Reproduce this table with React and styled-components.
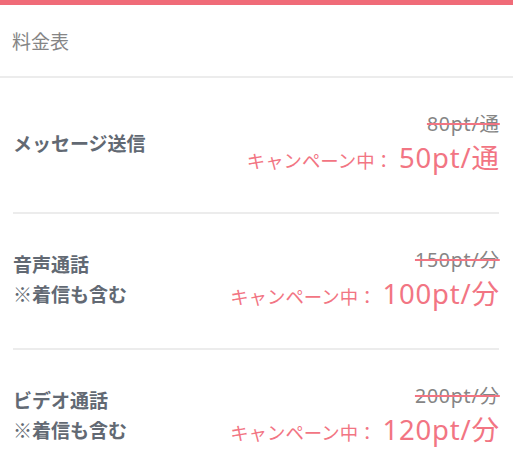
import React from "react";
import styled, { createGlobalStyle } from "styled-components";

const Global = createGlobalStyle`
  html, body { margin: 0; padding: 0; background: #fff; }
  body { font-family: "Noto Sans CJK JP", "Noto Sans", sans-serif; }
`;

const Page = styled.div`
  width: 513px;
  border-top: 5px solid #f06b78;
  background: #fff;
`;

const Header = styled.div`
  display: flex;
  align-items: center;
  padding-left: 12px;
  font-size: 19px;
  color: #858585;
  border-bottom: 2px solid #ececec;
  box-sizing: border-box;
  height: 73px;
`;

const List = styled.div`
  padding: 0 14px 0 13px;
`;

const Row = styled.div`
  display: flex;
  align-items: center;
  justify-content: space-between;
  box-sizing: border-box;
  min-height: 136px;
  padding-bottom: 5px;
  border-bottom: 2px solid #ececec;
`;

const Label = styled.div`
  font-size: 19px;
  font-weight: 700;
  line-height: 30px;
  color: #626973;
`;

const Prices = styled.div`
  display: flex;
  flex-direction: column;
  align-items: flex-end;
`;

const OldPrice = styled.div`
  font-family: "Noto Sans", "Noto Sans CJK JP", sans-serif;
  font-size: 19.5px;
  letter-spacing: 0.8px;
  margin-right: -0.8px;
  line-height: 30px;
  margin-top: 2px;
  color: #858585;
  text-decoration: line-through;
  text-decoration-color: #f27583;
  text-decoration-thickness: 1.5px;
`;

const Campaign = styled.div`
  display: flex;
  align-items: baseline;
  line-height: 38px;
  color: #f27583;
`;

const CampaignLabel = styled.span`
  font-size: 18.4px;
`;

const NewPrice = styled.span`
  font-family: "Noto Sans", "Noto Sans CJK JP", sans-serif;
  font-size: 27.5px;
  letter-spacing: 0.8px;
  margin-right: -0.8px;
  margin-left: 6px;
`;

const items = [
  { label: ["メッセージ送信"], old: "80pt/通", price: "50pt/通" },
  { label: ["音声通話", "※着信も含む"], old: "150pt/分", price: "100pt/分" },
  { label: ["ビデオ通話", "※着信も含む"], old: "200pt/分", price: "120pt/分" },
];

export default function App() {
  return (
    <Page>
      <Global />
      <Header>料金表</Header>
      <List>
        {items.map((it) => (
          <Row key={it.old + it.label[0]}>
            <Label>
              {it.label.map((l) => (
                <div key={l}>{l}</div>
              ))}
            </Label>
            <Prices>
              <OldPrice>{it.old}</OldPrice>
              <Campaign>
                <CampaignLabel>キャンペーン中：</CampaignLabel>
                <NewPrice>{it.price}</NewPrice>
              </Campaign>
            </Prices>
          </Row>
        ))}
      </List>
    </Page>
  );
}
